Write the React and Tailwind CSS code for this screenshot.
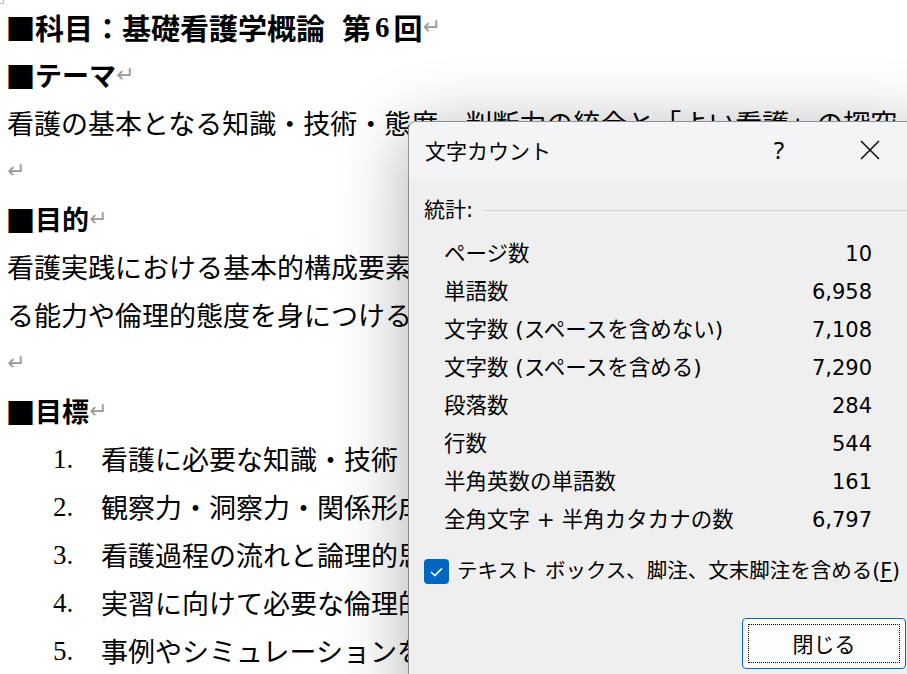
import React from "react";

const docFont = {
  fontFamily: '"Noto Sans CJK JP", "Liberation Serif", sans-serif',
};
const serif = { fontFamily: '"Liberation Serif", serif' };

function Ret() {
  return (
    <span className="text-[#9a9a9a] text-[22px] font-normal" style={{ fontFamily: '"DejaVu Sans", sans-serif' }}>
      ↵
    </span>
  );
}

function Sq() {
  return (
    <span className="inline-flex w-[27px] justify-center text-[30px] leading-none font-normal">■</span>
  );
}

function Line({ children, bold, size }) {
  return (
    <div className={"h-[48px] leading-[48px] flex items-center " + (bold ? "font-bold " : "font-normal ") + (size || "")}>
      <span className="inline-flex items-center">{children}</span>
    </div>
  );
}

function Item({ n, text }) {
  return (
    <div className="h-[48px] flex items-center">
      <span className="w-[46px] shrink-0"></span>
      <span className="w-[48px] shrink-0 inline-block" style={serif}>
        {n}.
      </span>
      <span>{text}</span>
    </div>
  );
}

const stats = [
  ["ページ数", "10"],
  ["単語数", "6,958"],
  ["文字数 (スペースを含めない)", "7,108"],
  ["文字数 (スペースを含める)", "7,290"],
  ["段落数", "284"],
  ["行数", "544"],
  ["半角英数の単語数", "161"],
  ["全角文字 + 半角カタカナの数", "6,797"],
];

const uiFont = { fontFamily: '"DejaVu Sans", "Noto Sans CJK JP", sans-serif' };

export default function App() {
  return (
    <div className="relative w-[907px] h-[674px] overflow-hidden bg-white">
      <div className="absolute left-0 top-0 w-[4px] h-[4px] border-r border-b border-[#bbb]"></div>
      <div className="pl-[7px] pt-[3px] text-[27px] text-black whitespace-nowrap" style={docFont}>
        <Line bold size="text-[29px]">
          <Sq />
          <span className="ml-[1px]">科目：基礎看護学概論</span>
          <span className="ml-[17px]">第</span>
          <span className="mx-[4px]" style={serif}>
            6
          </span>
          <span>回</span>
          <Ret />
        </Line>
        <Line bold>
          <Sq />
          <span className="ml-[1px]">テーマ</span>
          <Ret />
        </Line>
        <Line>看護の基本となる知識・技術・態度・判断力の統合と「よい看護」の探究</Line>
        <Line>
          <Ret />
        </Line>
        <Line bold>
          <Sq />
          <span className="ml-[1px]">目的</span>
          <Ret />
        </Line>
        <Line>看護実践における基本的構成要素を理解し、看護の本質を考え</Line>
        <Line>る能力や倫理的態度を身につける。</Line>
        <Line>
          <Ret />
        </Line>
        <Line bold>
          <Sq />
          <span className="ml-[1px]">目標</span>
          <Ret />
        </Line>
        <Item n="1" text="看護に必要な知識・技術・態度を理解する" />
        <Item n="2" text="観察力・洞察力・関係形成力を養う" />
        <Item n="3" text="看護過程の流れと論理的思考を学ぶ" />
        <Item n="4" text="実習に向けて必要な倫理的態度を身につける" />
        <Item n="5" text="事例やシミュレーションを通して考える" />
      </div>

      <div
        className="absolute left-[408px] top-[121px] w-[520px] h-[600px] rounded-tl-[8px] border-l border-t border-[#8f8f8f] bg-[#efefef] shadow-[0_10px_70px_rgba(0,0,0,0.32)] overflow-hidden text-black"
        style={{ fontFamily: '"Noto Sans CJK JP", "Noto Sans", sans-serif' }}
      >
        <div className="w-[498px] h-[56px] bg-[#f3f4f6] flex items-center pl-[16px] pr-[14px]">
          <span className="text-[21px] leading-none">文字カウント</span>
          <span className="ml-auto w-[46px] text-center text-[24px] leading-none" style={{ fontFamily: '"Noto Sans", sans-serif' }}>
            ?
          </span>
          <span className="ml-[45px] w-[46px] flex justify-center">
            <svg width="22" height="22" viewBox="0 0 22 22">
              <path d="M2 2 L20 20 M20 2 L2 20" stroke="#111" strokeWidth="1.6" fill="none" />
            </svg>
          </span>
        </div>
        <div className="w-[498px] pl-[15px] pt-[20px]">
          <div className="h-[24px] flex items-center">
            <span className="text-[21px] leading-none" style={uiFont}>
              統計:
            </span>
            <span className="ml-[10px] flex-1 h-px bg-[#d4d4d4]"></span>
          </div>
          <div className="ml-[20px] w-[428px] mt-[13px]">
            {stats.map(([k, v]) => (
              <div key={k} className="h-[38px] flex items-center justify-between text-[21.5px] leading-none">
                <span style={uiFont}>{k}</span>
                <span className="text-[21px]" style={uiFont}>
                  {v}
                </span>
              </div>
            ))}
          </div>
          <div className="mt-[20px] flex items-center h-[25px]">
            <span className="w-[25px] h-[25px] shrink-0 rounded-[4px] bg-[#0067c0] flex items-center justify-center">
              <svg width="13" height="10" viewBox="0 0 13 10">
                <path d="M1 5 L4.8 8.6 L12 1.4" stroke="white" strokeWidth="1.5" fill="none" />
              </svg>
            </span>
            <span className="ml-[8px] text-[20.5px] leading-none whitespace-nowrap" style={uiFont}>
              テキスト ボックス、脚注、文末脚注を含める(<span className="underline underline-offset-2">F</span>)
            </span>
          </div>
          <div className="mt-[34px] flex justify-end pr-[1px]">
            <div className="w-[164px] h-[51px] rounded-[4px] border-[1.5px] border-[#0067c0] bg-[#fdfdfd] p-[5px]">
              <div className="w-full h-full border border-dotted border-black flex items-center justify-center text-[21px] leading-none">
                閉じる
              </div>
            </div>
          </div>
        </div>
      </div>
    </div>
  );
}
